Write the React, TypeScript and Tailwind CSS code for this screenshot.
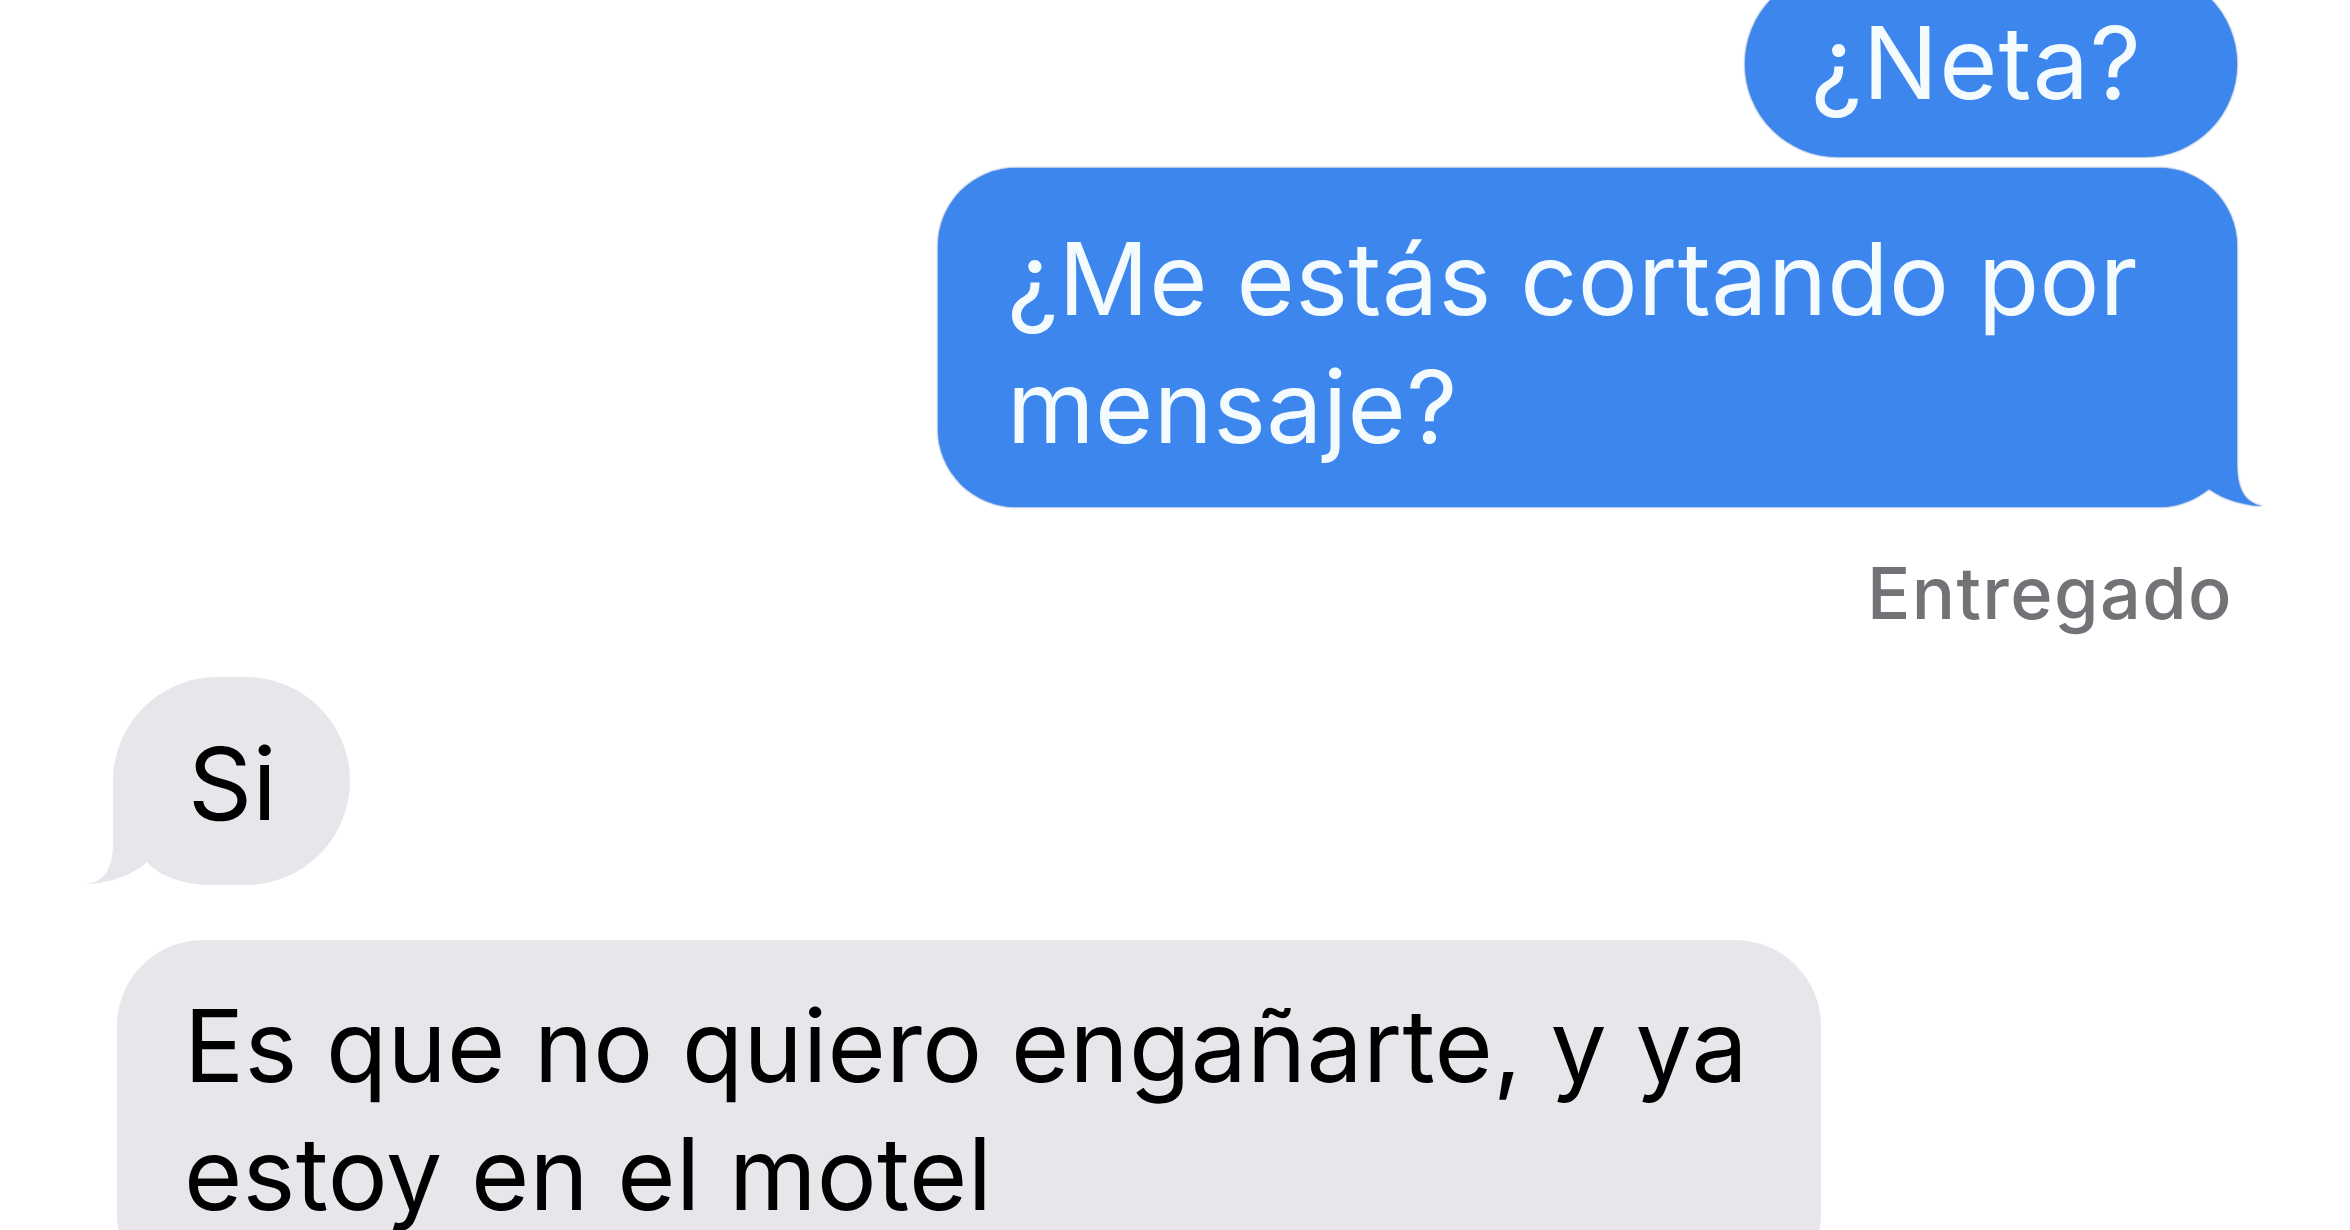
import React from "react";

const font = { fontFamily: "Inter, 'Noto Sans', sans-serif" } as React.CSSProperties;

function BlueTail() {
  return (
    <svg
      className="absolute bottom-0 right-[-26px]"
      width="140"
      height="100"
      viewBox="0 0 140 100"
    >
      <path
        d="M114,0 L114,58 C114,85 124,97 140,99 C128,99 98,94 80,77 C68,90 50,98 20,100 L0,100 L0,0 Z"
        fill="#3d86ee"
      />
    </svg>
  );
}

function GrayTail() {
  return (
    <svg
      className="absolute bottom-0 left-[-26px]"
      width="140"
      height="100"
      viewBox="0 0 140 100"
    >
      <path
        d="M26,0 L26,58 C26,85 16,97 0,99 C12,99 42,94 60,77 C72,90 90,98 120,100 L140,100 L140,0 Z"
        fill="#e6e6eb"
      />
    </svg>
  );
}

export default function App() {
  return (
    <div
      className="w-[2350px] h-[1230px] overflow-hidden bg-white flex flex-col"
      style={font}
    >
      {/* Sent: ¿Neta? */}
      <div className="flex justify-end pr-[113px] mt-[-29px]">
        <div className="drop-shadow-[0_0_1px_#2a62bb]">
          <div className="h-[186px] bg-[#3d86ee] text-[#f4fbff] rounded-[93px] pl-[66px] pr-[95px] pt-[28px] text-[100px] leading-[128px] tracking-[1px] whitespace-nowrap">
            ¿Neta?
          </div>
        </div>
      </div>

      {/* Sent: long */}
      <div className="flex justify-end pr-[113px] mt-[11px]">
        <div className="drop-shadow-[0_0_1px_#2a62bb]">
          <div className="relative w-[1299px] h-[339px] bg-[#3d86ee] text-[#f4fbff] rounded-[78px] pl-[69px] pt-[47px] text-[100px] leading-[128px] tracking-[0.4px] whitespace-nowrap">
            <div className="relative z-10">
              ¿Me estás cortando por
              <br />
              mensaje?
            </div>
            <BlueTail />
          </div>
        </div>
      </div>

      {/* Delivered */}
      <div className="flex justify-end pr-[117px] mt-[46px]">
        <div className="text-[72px] leading-[80px] font-medium text-[#727277] tracking-[1.4px] whitespace-nowrap">
          Entregado
        </div>
      </div>

      {/* Received: Si */}
      <div className="flex pl-[113px] mt-[44px]">
        <div className="relative w-[237px] h-[208px] bg-[#e6e6eb] text-black rounded-[104px] pl-[75px] pt-[43px] text-[100px] leading-[128px] tracking-[0.4px] whitespace-nowrap">
          <div className="relative z-10">Si</div>
          <GrayTail />
        </div>
      </div>

      {/* Received: long */}
      <div className="flex pl-[117px] mt-[55px]">
        <div className="w-[1704px] h-[360px] bg-[#e6e6eb] text-black rounded-[86px] pl-[67px] pt-[42px] text-[100px] leading-[128px] tracking-[0.3px] whitespace-nowrap">
          Es que no quiero engañarte, y ya
          <br />
          estoy en el motel
        </div>
      </div>
    </div>
  );
}
